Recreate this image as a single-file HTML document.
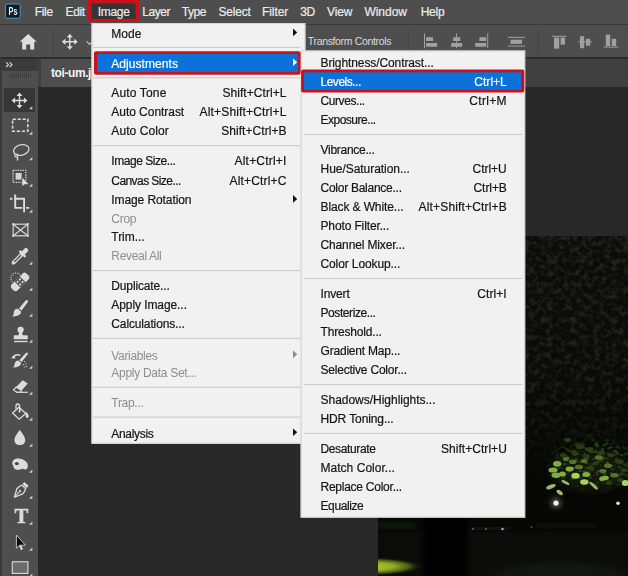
<!DOCTYPE html><html>
<head><meta charset="utf-8"><title>Photoshop Image menu</title>
<style>
html,body{margin:0;padding:0;}
body{width:628px;height:576px;overflow:hidden;position:relative;background:#282828;font-family:"Liberation Sans",sans-serif;font-size:12px;color:#000;}
.a{position:absolute;}
.t{position:absolute;white-space:pre;line-height:14px;height:14px;}
.mb{color:#ececec;font-size:12px;top:5.1px;-webkit-text-stroke:0.2px currentColor;}
.mi{color:#151515;-webkit-text-stroke:0.2px currentColor;}
.dis{color:#8d8d8d;}
.sep{position:absolute;height:1px;background:#cbcbcb;}
.arr{position:absolute;width:0;height:0;border-top:3.8px solid transparent;border-bottom:3.8px solid transparent;border-left:4.2px solid #111;}
</style></head><body>

<div class="a" id="menubar" style="left:0;top:0;width:628px;height:24px;background:#4e4e4e"></div>
<div class="a" style="left:0;top:23.6px;width:628px;height:1.4px;background:#3a3a3a"></div>
<div class="a" id="optbar" style="left:0;top:25px;width:628px;height:32.3px;background:#4e4e4e"></div>
<div class="a" style="left:0;top:57.3px;width:628px;height:1.5px;background:#2c2c2c"></div>
<div class="a" id="tabbar" style="left:38px;top:58.8px;width:590px;height:28.4px;background:#404040"></div>
<div class="a" id="tab" style="left:40.6px;top:58.6px;width:120px;height:28.6px;background:#4e4e4e"></div>
<div class="a" id="toolhead" style="left:0;top:59px;width:38px;height:12px;background:#3b3b3b"></div>
<div class="a" id="toolbar" style="left:0;top:71px;width:38px;height:505px;background:#4e4e4e"></div>
<div class="a" style="left:0;top:59px;width:1.5px;height:517px;background:#3a3a3a"></div>
<div class="a" id="movesel" style="left:4px;top:88px;width:31px;height:23.5px;background:#363636"></div>
<svg class="a" style="left:0;top:0" width="160" height="24" viewBox="0 0 160 24"><rect x="87.6" y="-1" width="51.5" height="22.9" rx="2" fill="#c9111b"></rect><rect x="91.6" y="3.5" width="43.9" height="15.4" fill="#353535"></rect></svg>
<span class="t mb" style="left: 34.8px; letter-spacing: -0.34px;">File</span>
<span class="t mb" style="left: 65.5px; letter-spacing: -0.35px;">Edit</span>
<span class="t mb" style="left: 97.8px; letter-spacing: -0.31px;">Image</span>
<span class="t mb" style="left: 142.2px; letter-spacing: -0.45px;">Layer</span>
<span class="t mb" style="left: 181.8px; letter-spacing: -0.43px;">Type</span>
<span class="t mb" style="left: 218.6px; letter-spacing: -0.23px;">Select</span>
<span class="t mb" style="left: 262.1px; letter-spacing: -0.11px;">Filter</span>
<span class="t mb" style="left: 300.2px; letter-spacing: -0.42px;">3D</span>
<span class="t mb" style="left: 327.1px; letter-spacing: -0.12px;">View</span>
<span class="t mb" style="left: 364.4px; letter-spacing: -0.01px;">Window</span>
<span class="t mb" style="left: 420.7px; letter-spacing: -0.27px;">Help</span>
<span class="t" style="left: 51px; top: 65.9px; color: rgb(244, 244, 244); font-weight: bold; font-size: 12px; letter-spacing: -0.42px;">toi-um.jpg</span>
<span class="t" style="left: 307.8px; top: 34.2px; color: rgb(220, 220, 220); font-size: 10.5px; letter-spacing: -0.34px;">Transform Controls</span>
<svg class="a" id="photo" style="left:378px;top:236px" width="250" height="340" viewBox="378 236 250 340">
<defs>
<filter id="fol" color-interpolation-filters="sRGB" x="0" y="0" width="100%" height="100%">
<feTurbulence type="fractalNoise" baseFrequency="0.17" numOctaves="2" seed="11" result="n"></feTurbulence>
<feColorMatrix in="n" type="matrix" values="0 0 0 0 0.135  0 0 0 0 0.14  0 0 0 0 0.11  3.2 0 0 0 -1.4"></feColorMatrix>
</filter>
<filter id="fol2" color-interpolation-filters="sRGB" x="0" y="0" width="100%" height="100%">
<feTurbulence type="fractalNoise" baseFrequency="0.3" numOctaves="2" seed="3" result="n"></feTurbulence>
<feColorMatrix in="n" type="matrix" values="0 0 0 0 0.22  0 0 0 0 0.22  0 0 0 0 0.17  0 3.4 0 0 -2.3"></feColorMatrix>
<feGaussianBlur stdDeviation="0.4"></feGaussianBlur>
</filter>
<linearGradient id="basebg" x1="0" y1="0" x2="0" y2="1"><stop offset="0" stop-color="#0c0d0a"></stop><stop offset="0.3" stop-color="#0b0c09"></stop><stop offset="0.55" stop-color="#080906"></stop><stop offset="1" stop-color="#060705"></stop></linearGradient>
<filter id="b1" x="-50%" y="-50%" width="200%" height="200%"><feGaussianBlur stdDeviation="0.7"></feGaussianBlur></filter>
<filter id="b2" x="-50%" y="-50%" width="200%" height="200%"><feGaussianBlur stdDeviation="2.5"></feGaussianBlur></filter>
<filter id="b3" x="-50%" y="-50%" width="200%" height="200%"><feGaussianBlur stdDeviation="5"></feGaussianBlur></filter>
<linearGradient id="grass" x1="0" x2="1"><stop offset="0" stop-color="#a9c62a"></stop><stop offset="0.45" stop-color="#6f8a1c"></stop><stop offset="1" stop-color="#1a2208" stop-opacity="0"></stop></linearGradient>
<linearGradient id="folfade" x1="0" y1="0" x2="0" y2="1"><stop offset="0" stop-color="#fff"></stop><stop offset="0.6" stop-color="#fff" stop-opacity="0.8"></stop><stop offset="1" stop-color="#fff" stop-opacity="0"></stop></linearGradient>
<mask id="fm"><rect x="378" y="236" width="250" height="250" fill="url(#folfade)"></rect></mask>
<filter id="leaf" color-interpolation-filters="sRGB" x="0" y="0" width="100%" height="100%">
<feTurbulence type="fractalNoise" baseFrequency="0.2 0.3" numOctaves="2" seed="5" result="n"></feTurbulence>
<feColorMatrix in="n" type="matrix" values="0 0 0 0 0.2  0 0 0 0 0.3  0 0 0 0 0.1  7 0 0 0 -3.6"></feColorMatrix>
<feGaussianBlur stdDeviation="0.5"></feGaussianBlur>
</filter>
<radialGradient id="lm" cx="0.5" cy="0.5" r="0.5"><stop offset="0" stop-color="#fff"></stop><stop offset="0.55" stop-color="#fff" stop-opacity="0.75"></stop><stop offset="1" stop-color="#fff" stop-opacity="0"></stop></radialGradient>
<mask id="leafmask"><ellipse cx="594" cy="463" rx="50" ry="32" fill="url(#lm)"></ellipse></mask>
<radialGradient id="grassr" cx="0.5" cy="0.5" r="0.5"><stop offset="0" stop-color="#aac62c"></stop><stop offset="0.45" stop-color="#93b024"></stop><stop offset="0.75" stop-color="#566c14" stop-opacity="0.85"></stop><stop offset="1" stop-color="#1a2208" stop-opacity="0"></stop></radialGradient>
<radialGradient id="gndr" cx="0.5" cy="0.5" r="0.5"><stop offset="0" stop-color="#181a14"></stop><stop offset="0.6" stop-color="#14160f" stop-opacity="0.8"></stop><stop offset="1" stop-color="#0b0c09" stop-opacity="0"></stop></radialGradient>
</defs>
<rect x="378" y="236" width="250" height="340" fill="url(#basebg)"></rect>
<g mask="url(#fm)"><rect x="378" y="236" width="250" height="250" filter="url(#fol)"></rect><rect x="378" y="236" width="250" height="250" filter="url(#fol2)"></rect></g>
<!-- ground -->
<rect x="378" y="532" width="250" height="44" fill="#0b0c09"></rect>
<ellipse cx="560" cy="580" rx="100" ry="26" fill="url(#gndr)"></ellipse>
<rect x="366" y="522" width="50" height="7" fill="#11120d" filter="url(#b2)"></rect>
<!-- trunk -->
<rect x="423" y="490" width="44" height="96" fill="#030403" filter="url(#b2)"></rect>
<!-- grass -->
<ellipse cx="370" cy="566.5" rx="52" ry="9" fill="url(#grassr)"></ellipse>
<!-- horizon lights -->
<g filter="url(#b1)" fill="#6b6b60">
<rect x="470" y="527" width="40" height="3" fill="#11120e"></rect>
<circle cx="473" cy="529" r="0.9"></circle><circle cx="486" cy="529" r="0.9"></circle><circle cx="502.5" cy="529" r="1.2" fill="#b9b9ac"></circle>
<circle cx="570.7" cy="525.8" r="1.3" fill="#8d8d80"></circle><circle cx="531.5" cy="527" r="0.9" fill="#55554c"></circle><circle cx="546" cy="527.5" r="0.9" fill="#55554c"></circle>
<rect x="536" y="523" width="60" height="5" fill="#10110d"></rect>
</g>
<!-- bush glow -->
<ellipse cx="590" cy="470" rx="40" ry="20" fill="#141d0b" filter="url(#b3)" opacity="0.8"></ellipse>
<g mask="url(#leafmask)"><rect x="540" y="428" width="88" height="70" filter="url(#leaf)"></rect></g>
<g filter="url(#b1)">
<g fill="#2b3b17">
<ellipse cx="567.6" cy="439.8" rx="3.5" ry="2"></ellipse><ellipse cx="580" cy="447" rx="4" ry="2.2"></ellipse><ellipse cx="590" cy="449" rx="3.5" ry="2"></ellipse><ellipse cx="601" cy="453" rx="4" ry="2.2"></ellipse><ellipse cx="611" cy="455" rx="3.5" ry="2"></ellipse><ellipse cx="619.7" cy="461.7" rx="4" ry="2.2"></ellipse><ellipse cx="574" cy="452" rx="3" ry="2"></ellipse><ellipse cx="563" cy="455" rx="3" ry="2"></ellipse><ellipse cx="586" cy="456" rx="3.5" ry="2"></ellipse><ellipse cx="624" cy="470" rx="3" ry="2"></ellipse><ellipse cx="596" cy="463" rx="3" ry="2"></ellipse><ellipse cx="590" cy="468" rx="3" ry="2"></ellipse><ellipse cx="620" cy="480" rx="3" ry="2"></ellipse><ellipse cx="609" cy="483" rx="3.5" ry="2"></ellipse>
</g>
<g fill="#52742a">
<ellipse cx="598.8" cy="457.5" rx="4" ry="2.3"></ellipse><ellipse cx="608" cy="465.8" rx="4" ry="2.2"></ellipse><ellipse cx="603" cy="471" rx="3.5" ry="2"></ellipse><ellipse cx="614.5" cy="475.2" rx="4" ry="2.2"></ellipse><ellipse cx="579" cy="467" rx="4" ry="2.3"></ellipse><ellipse cx="572.8" cy="461.7" rx="3.8" ry="2.3"></ellipse><ellipse cx="566" cy="459" rx="3" ry="2"></ellipse><ellipse cx="584" cy="461" rx="3" ry="2"></ellipse>
</g>
<g fill="#7fae42">
<ellipse cx="557.2" cy="463.8" rx="4.2" ry="2.8"></ellipse><ellipse cx="553" cy="470" rx="4.5" ry="2.6"></ellipse><ellipse cx="556" cy="475.3" rx="4.5" ry="2.7"></ellipse><ellipse cx="562.4" cy="474" rx="3.5" ry="2.6"></ellipse><ellipse cx="569.7" cy="469" rx="4" ry="2.4"></ellipse><ellipse cx="586.3" cy="474.6" rx="4" ry="2.5"></ellipse><ellipse cx="604" cy="478.3" rx="5" ry="2.3" transform="rotate(-12 604 478.3)"></ellipse>
</g>
<g fill="#a5d45a">
<ellipse cx="575.5" cy="475.8" rx="4.2" ry="3"></ellipse><ellipse cx="584.3" cy="482" rx="4.2" ry="2.8"></ellipse><ellipse cx="625.3" cy="483" rx="3.5" ry="3"></ellipse>
</g>
<g fill="#9db873">
<ellipse cx="551" cy="486.7" rx="5" ry="2" transform="rotate(-22 551 486.7)"></ellipse><ellipse cx="559.7" cy="492.5" rx="3.6" ry="2" transform="rotate(38 559.7 492.5)"></ellipse><ellipse cx="565.5" cy="482.5" rx="4.5" ry="1.4" transform="rotate(28 565.5 482.5)"></ellipse><ellipse cx="593.6" cy="485.6" rx="5.5" ry="1.4" transform="rotate(42 593.6 485.6)"></ellipse>
</g>
</g>
<!-- lamps -->
<circle cx="556" cy="503" r="5" fill="#55584a" filter="url(#b2)"></circle>
<circle cx="556" cy="503" r="2.6" fill="#f4f4ea" filter="url(#b1)"></circle>
<circle cx="618" cy="503.3" r="1.8" fill="#e4e4da" filter="url(#b1)"></circle>
</svg>

<svg class="a" id="tools" style="left:0;top:56px" width="42" height="520" viewBox="0 56 42 520" fill="none" stroke="none">
<defs>
<path id="ct" d="M32.3 0 V3.3 H29 Z" fill="#c9c9c9"></path>
<filter id="ib" x="-20%" y="-20%" width="140%" height="140%"><feGaussianBlur stdDeviation="0.35"></feGaussianBlur></filter>
</defs>
<g filter="url(#ib)">
<!-- >> -->
<path d="M6.2 62.4 L8.5 64.7 L6.2 67 M9.7 62.4 L12 64.7 L9.7 67" stroke="#dedede" stroke-width="1.1"></path>
<!-- grip -->
<path d="M10 75.5 H31" stroke="#3d3d3d" stroke-width="4.4" stroke-dasharray="1 1"></path>
<!-- move -->
<g transform="translate(19.5 100.5)" fill="#dcdcdc">
<path d="M-5 0 H5 M0 -5 V5" stroke="#dcdcdc" stroke-width="1.4"></path>
<path d="M0 -8 L3 -4.4 H-3 Z M0 8 L3 4.4 H-3 Z M-8 0 L-4.4 -3 V3 Z M8 0 L4.4 -3 V3 Z"></path>
</g>
<use href="#ct" y="106"></use>
<!-- marquee -->
<rect x="12.6" y="119.3" width="15.2" height="12" stroke="#dcdcdc" stroke-width="1.5" stroke-dasharray="3.2 1.8"></rect>
<use href="#ct" y="131.5"></use>
<!-- lasso -->
<g stroke="#d6d6d6" stroke-width="1.3">
<ellipse cx="21.3" cy="150" rx="7.8" ry="5.2" transform="rotate(-14 21.3 150)"></ellipse>
<circle cx="16.3" cy="155.6" r="1.5"></circle>
<path d="M16.8 157 Q18.5 158.5 17.2 160.5"></path>
</g>
<use href="#ct" y="157"></use>
<!-- object select -->
<rect x="13" y="170.4" width="12.8" height="12" stroke="#dcdcdc" stroke-width="1.3" stroke-dasharray="1.3 1.1"></rect>
<rect x="15.6" y="173" width="6" height="6.6" fill="#d6d6d6"></rect>
<path d="M22 177.2 V186.6 L24.6 184.4 H29 Z" fill="#e6e6e6" stroke="#4a4a4a" stroke-width="0.6"></path>
<use href="#ct" y="183.5"></use>
<!-- crop -->
<g stroke="#dcdcdc" stroke-width="1.9">
<path d="M10 198.8 H12.4 M15.2 194.4 V207.9 H22.4 M26 207.9 H29.2"></path>
<path d="M14 198.8 H24.1 V212.3"></path>
</g>
<use href="#ct" y="209.5"></use>
<!-- frame -->
<g stroke="#d6d6d6" stroke-width="1.2">
<rect x="13.2" y="224.2" width="14.6" height="11.6"></rect>
<path d="M13.2 224.2 L27.8 235.8 M27.8 224.2 L13.2 235.8"></path>
</g>
<g fill="#dcdcdc"><circle cx="13.2" cy="224.2" r="1.1"></circle><circle cx="27.8" cy="224.2" r="1.1"></circle><circle cx="13.2" cy="235.8" r="1.1"></circle><circle cx="27.8" cy="235.8" r="1.1"></circle></g>
<!-- eyedropper -->
<g stroke-linecap="round">
<path d="M13.8 262.4 L21.6 254.6" stroke="#dcdcdc" stroke-width="4"></path>
<path d="M14.6 261.6 L20.6 255.6" stroke="#555" stroke-width="1.4"></path>
<path d="M20.2 251.6 L24.8 256.2" stroke="#dcdcdc" stroke-width="2.4"></path>
<path d="M23.4 252.8 L26 250.2" stroke="#dcdcdc" stroke-width="4.4"></path>
<path d="M12.6 263.6 L13.6 262.6" stroke="#dcdcdc" stroke-width="1.6"></path>
</g>
<use href="#ct" y="261.5"></use>
<!-- healing brush -->
<g transform="rotate(-45 20 282)">
<rect x="9.6" y="277.8" width="21" height="8.4" rx="3" fill="#dcdcdc"></rect>
<rect x="16.4" y="277.8" width="7.4" height="8.4" fill="#555"></rect>
<g fill="#dcdcdc"><circle cx="18.4" cy="280.2" r="1.05"></circle><circle cx="21.8" cy="280.2" r="1.05"></circle><circle cx="18.4" cy="283.8" r="1.05"></circle><circle cx="21.8" cy="283.8" r="1.05"></circle></g>
</g>
<path d="M12.4 282 A5 5 0 0 1 20 274.6" stroke="#dcdcdc" stroke-width="1.1" stroke-dasharray="1 1.2"></path>
<use href="#ct" y="287.5"></use>
<!-- brush -->
<g fill="#dcdcdc">
<path d="M27.6 300.2 Q28.6 301 27.4 302.8 L21.6 310.6 L19 308.4 L25.4 300.8 Q26.8 299.6 27.6 300.2 Z"></path>
<path d="M18 308.8 L21.2 311.8 Q20.6 316.6 12 316.6 Q14.2 314.8 13.8 312 Q14.8 308.4 18 308.8 Z"></path>
</g>
<use href="#ct" y="313.5"></use>
<!-- stamp -->
<g fill="#dcdcdc">
<circle cx="20.6" cy="329.8" r="3.1"></circle>
<path d="M19.2 331.5 H22 L22.6 335.2 H27 Q27.8 335.2 27.8 336 V339.2 H13.8 V336 Q13.8 335.2 14.6 335.2 H18.6 Z"></path>
<rect x="14.2" y="340.8" width="13.2" height="1.4"></rect>
</g>
<use href="#ct" y="339.5"></use>
<!-- history brush -->
<g fill="#dcdcdc">
<path d="M27.6 352.6 Q28.4 353.2 27.4 354.8 L21.6 362 L19.4 360.2 L25.6 353.2 Q26.8 352 27.6 352.6 Z"></path>
<path d="M18.2 360.4 L21.2 363 Q20.6 367.4 12.8 367.6 Q15 365.8 14.6 363.4 Q15.6 360.2 18.2 360.4 Z"></path>
<path d="M11 358.2 L14.4 354.4 L15.4 358.4 Z"></path>
<circle cx="24.4" cy="361.6" r="0.6"></circle><circle cx="25.8" cy="363.8" r="0.6"></circle><circle cx="23.4" cy="364.6" r="0.6"></circle><circle cx="26.6" cy="366.4" r="0.6"></circle><circle cx="24.4" cy="367" r="0.6"></circle>
</g>
<path d="M13.6 356.6 Q16.4 353.6 20.4 355.4" stroke="#dcdcdc" stroke-width="1.3"></path>
<use href="#ct" y="365.5"></use>
<!-- eraser -->
<path d="M22.6 380.2 L27.8 383.6 L21.6 390.6 L16.2 387 Z" fill="#dcdcdc"></path>
<path d="M16.2 387 L21.6 390.6 L20 392.2 H16.6 L13.4 390 Z" stroke="#dcdcdc" stroke-width="1.1"></path>
<path d="M16 392.3 H28" stroke="#dcdcdc" stroke-width="1.2"></path>
<use href="#ct" y="391.5"></use>
<!-- paint bucket -->
<g stroke="#dcdcdc" stroke-width="1.3">
<path d="M19 407.2 L25.8 413.4 L19.2 419.2 L12.6 413 Z"></path>
<path d="M19.6 411 V406.2 Q19.4 404 17.6 404 Q15.8 404.2 16 406.6 V409.4"></path>
</g>
<circle cx="19.6" cy="411.4" r="1.1" fill="#dcdcdc"></circle>
<path d="M25.6 411.8 Q28.8 413.6 28.6 416.4 Q28.4 418 27 418 Q25.6 417.8 25.8 416 Z" fill="#dcdcdc"></path>
<use href="#ct" y="417.5"></use>
<!-- drop -->
<path d="M19.8 430 Q25.2 436.6 25.2 440 Q25.2 445 19.8 445 Q14.4 445 14.4 440 Q14.4 436.6 19.8 430 Z" fill="#dcdcdc"></path>
<use href="#ct" y="443.5"></use>
<!-- sponge/dodge -->
<path d="M12.2 463.4 Q12.6 459 17 458.6 Q21.6 458 24.6 460.6 Q28.2 462.6 27.8 466.6 Q27.6 469.6 25 469.4 Q22.8 468.4 20.8 469.2 Q17.4 470.6 14.8 469 Q12.8 467.6 13.4 465.6 Q12.2 464.8 12.2 463.4 Z" fill="#dcdcdc"></path>
<ellipse cx="16.8" cy="463.6" rx="2" ry="1.7" fill="#444"></ellipse>
<use href="#ct" y="469.5"></use>
<!-- pen -->
<g transform="rotate(42 20.5 490.5)">
<path d="M20.5 499.6 L16.6 491.6 Q16.6 488 18 485.6 H23 Q24.4 488 24.4 491.6 Z" stroke="#dcdcdc" stroke-width="1.3" stroke-linejoin="round"></path>
<path d="M20.5 498.6 V492" stroke="#dcdcdc" stroke-width="1"></path>
<circle cx="20.5" cy="491.2" r="1.1" fill="#dcdcdc"></circle>
<rect x="17.6" y="481.6" width="5.8" height="2.8" fill="#dcdcdc"></rect>
</g>
<use href="#ct" y="495.5"></use>
<!-- path select arrow -->
<path d="M19.8 544.6 L22 549.6" stroke="#e0e0e0" stroke-width="2.2"></path><path d="M16.4 535 V548.2 L19.8 545.2 H25.4 Z" fill="#0a0a0a" stroke="#d0d0d0" stroke-width="0.9" stroke-linejoin="round"></path>
<use href="#ct" y="547.5"></use>
<!-- rectangle -->
<rect x="12.3" y="561.8" width="15.6" height="11.6" fill="#6c6c6c" stroke="#dcdcdc" stroke-width="1.1"></rect>
<use href="#ct" y="573.5"></use>
</g>
<!-- type -->
<text x="21.3" y="523.2" text-anchor="middle" font-family="Liberation Serif, serif" font-weight="bold" font-size="20.5" fill="#dcdcdc" stroke="#dcdcdc" stroke-width="0.5">T</text>
<use href="#ct" y="521.5"></use>
</svg>
<svg class="a" id="opticons" style="left:0;top:0" width="628" height="60" viewBox="0 0 628 60" fill="none">
<g filter="url(#ib)">
<!-- Ps logo -->
<rect x="5.4" y="4" width="14.8" height="14.2" rx="1.6" fill="#0a1f2c" stroke="#4f9bbd" stroke-width="1"></rect>
<!-- home -->
<path d="M28.2 34 L36.6 41.8 H34.2 V49.4 H30.2 V44.6 H26.2 V49.4 H22.2 V41.8 H19.8 Z" fill="#dedede"></path>
<!-- divider -->
<path d="M53.5 30 V55" stroke="#454545" stroke-width="1"></path>
<!-- move -->
<g transform="translate(69.8 41.8)" fill="#dedede">
<path d="M-5 0 H5 M0 -5 V5" stroke="#dedede" stroke-width="1.4"></path>
<path d="M0 -8 L3 -4.4 H-3 Z M0 8 L3 4.4 H-3 Z M-8 0 L-4.4 -3 V3 Z M8 0 L4.4 -3 V3 Z"></path>
</g>
<path d="M86.6 41.4 L89.6 44.4 L92.6 41.4" stroke="#c4c4c4" stroke-width="1.2"></path>
<!-- divider -->
<path d="M408.5 29 V55" stroke="#454545" stroke-width="1"></path>
<path d="M537.8 31 V55" stroke="#454545" stroke-width="1"></path>
<g fill="#a0a0a0" stroke="none">
<!-- align left -->
<rect x="424" y="33.4" width="1" height="15"></rect><rect x="426" y="37.2" width="7" height="3.8"></rect><rect x="426" y="43" width="11.2" height="3.8"></rect>
<!-- align center -->
<rect x="456" y="33.4" width="1" height="15"></rect><rect x="453.2" y="37.2" width="7" height="3.8"></rect><rect x="451.2" y="43" width="11" height="3.8"></rect>
<!-- align right -->
<rect x="487.2" y="33.4" width="1" height="15"></rect><rect x="479.4" y="37.2" width="6.8" height="3.8"></rect><rect x="475.2" y="43" width="11" height="3.8"></rect>
<!-- distribute -->
<rect x="507.8" y="36.8" width="17.2" height="1"></rect><rect x="510.6" y="39.7" width="11.4" height="4.2"></rect><rect x="507.8" y="45.6" width="17.2" height="1"></rect>
<!-- align top -->
<rect x="552" y="35.8" width="14.4" height="1"></rect><rect x="554" y="37.6" width="5.2" height="11"></rect><rect x="560.6" y="37.6" width="4.4" height="7"></rect>
<!-- align vcenter -->
<rect x="578" y="41.3" width="14" height="1"></rect><rect x="580" y="36.2" width="4.2" height="12"></rect><rect x="586" y="38.8" width="4.2" height="6.8"></rect>
<!-- align bottom -->
<rect x="603.6" y="46.6" width="14.6" height="1"></rect><rect x="605.8" y="34.6" width="4.4" height="11.4"></rect><rect x="611.8" y="38.8" width="4.4" height="7.2"></rect>
</g>
</g>
<text x="8.6" y="15" font-family="Liberation Sans, sans-serif" font-weight="bold" font-size="10.4" fill="#e2f1fa" textLength="9" lengthAdjust="spacingAndGlyphs">Ps</text>
</svg>

<svg class="a" id="menus" style="left:0;top:0" width="628" height="576" viewBox="0 0 628 576">
<rect x="91.5" y="23" width="213.9" height="420.8" fill="#f1f1f1"></rect>
<rect x="92" y="23.5" width="212.9" height="419.8" fill="none" stroke="#d6d6d6" stroke-width="1"></rect>
<rect x="300.6" y="50.5" width="224.6" height="467.2" fill="#f1f1f1"></rect>
<rect x="301.1" y="51" width="223.6" height="466.2" fill="none" stroke="#cfcfcf" stroke-width="1"></rect>
<rect x="93" y="46.88" width="207" height="1.1" fill="#cbcbcb"></rect>
<rect x="93" y="77.25" width="207" height="1.1" fill="#cbcbcb"></rect>
<rect x="93" y="145.12" width="207" height="1.1" fill="#cbcbcb"></rect>
<rect x="93" y="270.00" width="207" height="1.1" fill="#cbcbcb"></rect>
<rect x="93" y="337.87" width="207" height="1.1" fill="#cbcbcb"></rect>
<rect x="93" y="386.74" width="207" height="1.1" fill="#cbcbcb"></rect>
<rect x="93" y="416.60" width="207" height="1.1" fill="#cbcbcb"></rect>
<rect x="304" y="133.90" width="218.5" height="1.1" fill="#cbcbcb"></rect>
<rect x="304" y="277.90" width="218.5" height="1.1" fill="#cbcbcb"></rect>
<rect x="304" y="383.90" width="218.5" height="1.1" fill="#cbcbcb"></rect>
<rect x="304" y="432.90" width="218.5" height="1.1" fill="#cbcbcb"></rect>
<rect x="94" y="51.2" width="206.6" height="23.5" rx="2" fill="#c9111b"></rect>
<rect x="97" y="53.9" width="201.1" height="18.1" fill="#0a72d8"></rect>
<rect x="301.1" y="69.5" width="223.2" height="23" rx="2" fill="#c9111b"></rect>
<rect x="304" y="72.3" width="217.2" height="17.4" fill="#0a72d8"></rect>
<path d="M293 28.60 L297.2 32.40 L293 36.20 Z" fill="#111"></path>
<path d="M293 58.47 L297.2 62.27 L293 66.07 Z" fill="#fff"></path>
<path d="M293 195.11 L297.2 198.91 L293 202.71 Z" fill="#111"></path>
<path d="M293 350.55 L297.2 354.35 L293 358.15 Z" fill="#8b8b8b"></path>
<path d="M293 428.49 L297.2 432.29 L293 436.09 Z" fill="#111"></path>
</svg>
<span class="t mi" style="left: 111.3px; top: 26.6px; letter-spacing: 0.04px;">Mode</span>
<span class="t mi" style="left: 111.3px; top: 56.5px; color: rgb(255, 255, 255); letter-spacing: 0.06px;">Adjustments</span>
<span class="t mi" style="left: 111.3px; top: 86.3px; letter-spacing: 0.15px;">Auto Tone</span>
<span class="t mi" style="left: 222.4px; top: 86.3px; letter-spacing: 0.07px;">Shift+Ctrl+L</span>
<span class="t mi" style="left: 111.3px; top: 105.3px; letter-spacing: -0.04px;">Auto Contrast</span>
<span class="t mi" style="left: 199.6px; top: 105.3px; letter-spacing: 0.16px;">Alt+Shift+Ctrl+L</span>
<span class="t mi" style="left: 111.3px; top: 124.3px; letter-spacing: 0.08px;">Auto Color</span>
<span class="t mi" style="left: 221.2px; top: 124.3px; letter-spacing: 0.06px;">Shift+Ctrl+B</span>
<span class="t mi" style="left: 111.3px; top: 154.2px; letter-spacing: -0.45px;">Image Size...</span>
<span class="t mi" style="left: 234.5px; top: 154.2px; letter-spacing: 0.21px;">Alt+Ctrl+I</span>
<span class="t mi" style="left: 111.3px; top: 173.5px; letter-spacing: -0.57px;">Canvas Size...</span>
<span class="t mi" style="left: 229.6px; top: 173.5px; letter-spacing: 0.16px;">Alt+Ctrl+C</span>
<span class="t mi" style="left: 111.3px; top: 193.1px; letter-spacing: -0.09px;">Image Rotation</span>
<span class="t dis" style="left: 111.3px; top: 211.7px; letter-spacing: -0.28px;">Crop</span>
<span class="t mi" style="left: 111.3px; top: 230.2px; letter-spacing: -0.05px;">Trim...</span>
<span class="t dis" style="left: 111.3px; top: 249.2px; letter-spacing: -0.32px;">Reveal All</span>
<span class="t mi" style="left: 111.3px; top: 279.1px; letter-spacing: -0.14px;">Duplicate...</span>
<span class="t mi" style="left: 111.3px; top: 298.1px; letter-spacing: -0.08px;">Apply Image...</span>
<span class="t mi" style="left: 111.3px; top: 317.1px; letter-spacing: -0.13px;">Calculations...</span>
<span class="t dis" style="left: 111.3px; top: 348.6px; letter-spacing: -0.33px;">Variables</span>
<span class="t dis" style="left: 111.3px; top: 366.4px; letter-spacing: -0.28px;">Apply Data Set...</span>
<span class="t dis" style="left: 111.3px; top: 395.8px; letter-spacing: -0.29px;">Trap...</span>
<span class="t mi" style="left: 111.3px; top: 426.5px; letter-spacing: -0.31px;">Analysis</span>
<span class="t mi" style="left: 320.5px; top: 56.1px; letter-spacing: -0.1px;">Brightness/Contrast...</span>
<span class="t mi" style="left: 320.5px; top: 75px; color: rgb(255, 255, 255); letter-spacing: -0.49px;">Levels...</span>
<span class="t mi" style="left: 474.3px; top: 75px; color: rgb(255, 255, 255); letter-spacing: 0.03px;">Ctrl+L</span>
<span class="t mi" style="left: 320.5px; top: 94px; letter-spacing: -0.42px;">Curves...</span>
<span class="t mi" style="left: 469.3px; top: 94px; letter-spacing: 0.3px;">Ctrl+M</span>
<span class="t mi" style="left: 320.5px; top: 113px; letter-spacing: -0.5px;">Exposure...</span>
<span class="t mi" style="left: 320.5px; top: 143px; letter-spacing: -0.28px;">Vibrance...</span>
<span class="t mi" style="left: 320.5px; top: 162px; letter-spacing: -0.04px;">Hue/Saturation...</span>
<span class="t mi" style="left: 472.5px; top: 162px; letter-spacing: -0.01px;">Ctrl+U</span>
<span class="t mi" style="left: 320.5px; top: 181px; letter-spacing: -0.26px;">Color Balance...</span>
<span class="t mi" style="left: 473.5px; top: 181px; letter-spacing: -0.06px;">Ctrl+B</span>
<span class="t mi" style="left: 320.5px; top: 200px; letter-spacing: -0.11px;">Black &amp; White...</span>
<span class="t mi" style="left: 418.6px; top: 200px; letter-spacing: 0.16px;">Alt+Shift+Ctrl+B</span>
<span class="t mi" style="left: 320.5px; top: 219px; letter-spacing: -0.13px;">Photo Filter...</span>
<span class="t mi" style="left: 320.5px; top: 238px; letter-spacing: -0.14px;">Channel Mixer...</span>
<span class="t mi" style="left: 320.5px; top: 257.1px; letter-spacing: -0.11px;">Color Lookup...</span>
<span class="t mi" style="left: 320.5px; top: 287.1px; letter-spacing: -0.14px;">Invert</span>
<span class="t mi" style="left: 477.3px; top: 287.1px; letter-spacing: 0.08px;">Ctrl+I</span>
<span class="t mi" style="left: 320.5px; top: 306.1px; letter-spacing: -0.42px;">Posterize...</span>
<span class="t mi" style="left: 320.5px; top: 325.1px; letter-spacing: -0.18px;">Threshold...</span>
<span class="t mi" style="left: 320.5px; top: 344.1px; letter-spacing: -0.2px;">Gradient Map...</span>
<span class="t mi" style="left: 320.5px; top: 363.1px; letter-spacing: -0.21px;">Selective Color...</span>
<span class="t mi" style="left: 320.5px; top: 393.1px; letter-spacing: -0.02px;">Shadows/Highlights...</span>
<span class="t mi" style="left: 320.5px; top: 412.1px; letter-spacing: -0.11px;">HDR Toning...</span>
<span class="t mi" style="left: 320.5px; top: 442.1px; letter-spacing: -0.37px;">Desaturate</span>
<span class="t mi" style="left: 441px; top: 442.1px; letter-spacing: 0.04px;">Shift+Ctrl+U</span>
<span class="t mi" style="left: 320.5px; top: 461.1px; letter-spacing: 0.03px;">Match Color...</span>
<span class="t mi" style="left: 320.5px; top: 480.1px; letter-spacing: -0.25px;">Replace Color...</span>
<span class="t mi" style="left: 320.5px; top: 499.1px; letter-spacing: -0.4px;">Equalize</span>
</body></html>
